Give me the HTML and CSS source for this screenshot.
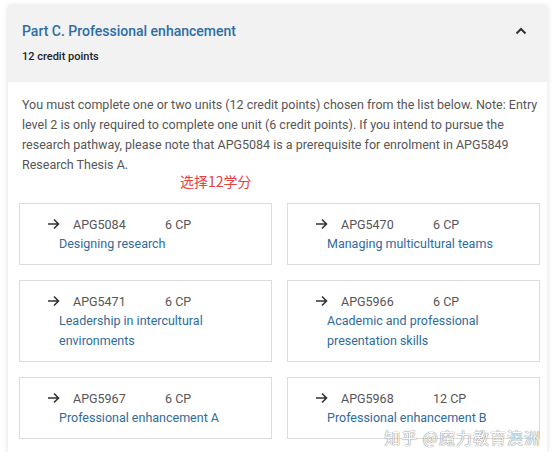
FILE: index.html
```html
<!DOCTYPE html>
<html>
<head>
<meta charset="utf-8">
<link rel="stylesheet" href="styles.css">
</head>
<body>
<div class="card">
  <div class="header">
    <div class="header-top">
      <h2 class="title">Part C. Professional enhancement</h2>
      <svg class="chev" width="12" height="8" viewBox="0 0 12 8"><path d="M1.5 6.5 L6 2 L10.5 6.5" fill="none" stroke="#333" stroke-width="2"/></svg>
    </div>
    <div class="credits">12 credit points</div>
  </div>
  <div class="body">
    <p class="desc">You must complete one or two units (12 credit points) chosen from the list below. Note: Entry level 2 is only required to complete one unit (6 credit points). If you intend to pursue the research pathway, please note that APG5084 is a prerequisite for enrolment in APG5849 Research Thesis A.</p>
    <div class="note">选择12学分</div>
    <div class="grid">
      <div class="unit">
        <div class="unit-top"><svg class="arrow" width="13" height="12" viewBox="0 0 13 12"><path d="M1 6 H11.5 M7 1.5 L11.5 6 L7 10.5" fill="none" stroke="#333" stroke-width="1.6"/></svg><span class="code">APG5084</span><span class="cp">6 CP</span></div>
        <div class="unit-name">Designing research</div>
      </div>
      <div class="unit">
        <div class="unit-top"><svg class="arrow" width="13" height="12" viewBox="0 0 13 12"><path d="M1 6 H11.5 M7 1.5 L11.5 6 L7 10.5" fill="none" stroke="#333" stroke-width="1.6"/></svg><span class="code">APG5470</span><span class="cp">6 CP</span></div>
        <div class="unit-name">Managing multicultural teams</div>
      </div>
      <div class="unit">
        <div class="unit-top"><svg class="arrow" width="13" height="12" viewBox="0 0 13 12"><path d="M1 6 H11.5 M7 1.5 L11.5 6 L7 10.5" fill="none" stroke="#333" stroke-width="1.6"/></svg><span class="code">APG5471</span><span class="cp">6 CP</span></div>
        <div class="unit-name">Leadership in intercultural<br>environments</div>
      </div>
      <div class="unit">
        <div class="unit-top"><svg class="arrow" width="13" height="12" viewBox="0 0 13 12"><path d="M1 6 H11.5 M7 1.5 L11.5 6 L7 10.5" fill="none" stroke="#333" stroke-width="1.6"/></svg><span class="code">APG5966</span><span class="cp">6 CP</span></div>
        <div class="unit-name">Academic and professional<br>presentation skills</div>
      </div>
      <div class="unit">
        <div class="unit-top"><svg class="arrow" width="13" height="12" viewBox="0 0 13 12"><path d="M1 6 H11.5 M7 1.5 L11.5 6 L7 10.5" fill="none" stroke="#333" stroke-width="1.6"/></svg><span class="code">APG5967</span><span class="cp">6 CP</span></div>
        <div class="unit-name">Professional enhancement A</div>
      </div>
      <div class="unit">
        <div class="unit-top"><svg class="arrow" width="13" height="12" viewBox="0 0 13 12"><path d="M1 6 H11.5 M7 1.5 L11.5 6 L7 10.5" fill="none" stroke="#333" stroke-width="1.6"/></svg><span class="code">APG5968</span><span class="cp">12 CP</span></div>
        <div class="unit-name">Professional enhancement B</div>
      </div>
    </div>
  </div>
  <div class="watermark">知乎 @魔力教育澳洲</div>
</div>
</body>
</html>
```

FILE: styles.css
```css
html, body {
  margin: 0;
  padding: 0;
  background: #fff;
}
body {
  font-family: Roboto, "Noto Sans", "Noto Sans CJK SC", sans-serif;
  padding: 5px 0 0 8px;
}
.card {
  position: relative;
  width: 539px;
  height: 447px;
  background: #fff;
  box-shadow: 0 1px 6px rgba(0,0,0,0.14);
  box-sizing: border-box;
}
.header {
  background: #f2f2f2;
  height: 77px;
  padding: 16px 20px 0 14px;
  box-sizing: border-box;
}
.header-top {
  display: flex;
  align-items: center;
  justify-content: space-between;
}
.title {
  margin: 0;
  font-size: 14px;
  line-height: 20px;
  font-weight: 500;
  color: #2d6da6;
}
.credits {
  margin-top: 9px;
  font-size: 11px;
  line-height: 14px;
  font-weight: 500;
  color: #222;
}
.body {
  padding: 13px 7px 0 11px;
}
.desc {
  margin: 0 0 0 3px;
  font-size: 12.5px;
  line-height: 20px;
  color: #555;
}
.note {
  margin: -3px 0 0 161px;
  font-family: "Noto Sans CJK SC", sans-serif;
  font-size: 14px;
  line-height: 18px;
  color: #e8403e;
}
.grid {
  margin-top: 13px;
  display: grid;
  grid-template-columns: 253px 253px;
  column-gap: 15px;
  row-gap: 15px;
}
.unit {
  border: 1px solid #dcdcdc;
  padding: 10px 8px 10px 27px;
  box-sizing: border-box;
}
.unit-top {
  display: flex;
  align-items: center;
  height: 20px;
  font-size: 12.5px;
  color: #555;
}
.arrow {
  flex: none;
}
.code {
  margin-left: 13px;
  width: 92px;
}
.unit-name {
  margin-left: 12px;
  font-size: 12.5px;
  line-height: 20px;
  color: #2f6b9c;
}
.watermark {
  position: absolute;
  right: 6px;
  bottom: 6px;
  font-family: "Noto Sans CJK SC", sans-serif;
  font-size: 16px;
  line-height: 18px;
  color: #fff;
  text-shadow: 0 0 1px rgba(0,0,0,0.55), 0 0 1px rgba(0,0,0,0.35);
  letter-spacing: 1px;
}
```
